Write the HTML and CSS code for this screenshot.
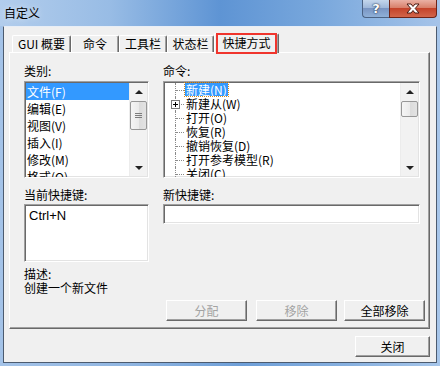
FILE: index.html
```html
<!DOCTYPE html>
<html lang="zh-CN">
<head>
  <meta charset="UTF-8" />
  <title>自定义</title>
  <link rel="stylesheet" href="styles.css">
</head>
<body>
  <div class="window">
    <div class="titlebar">
      <span class="title">自定义</span>
      <div class="caption-btns">
        <span class="cap-help">?</span>
        <span class="cap-close">
          <svg width="14" height="11" viewBox="0 0 14 11">
            <path d="M1 1h4l2 2.5L9 1h4L9.2 5.5 13 10H9L7 7.5 5 10H1l3.8-4.5z" fill="#fff" stroke="#4a1a12" stroke-width="1" stroke-linejoin="round"/>
          </svg>
        </span>
      </div>
    </div>

    <div class="client">
      <div class="tabs">
        <span class="tab t1">GUI 概要</span>
        <span class="tab t2">命令</span>
        <span class="tab t3">工具栏</span>
        <span class="tab t4">状态栏</span>
        <span class="tab tab-active">快捷方式</span>
      </div>

      <div class="panel">
        <div class="pane-grid">
          <div class="col">
            <div class="label">类别:</div>
            <div class="sunken listbox">
              <ul class="items">
                <li class="selected">文件(F)</li>
                <li>编辑(E)</li>
                <li>视图(V)</li>
                <li>插入(I)</li>
                <li>修改(M)</li>
                <li>格式(O)</li>
              </ul>
              <div class="vscroll">
                <span class="sb-btn"><i class="arrow-up"></i></span>
                <span class="sb-thumb tall"><i class="grip"></i></span>
                <span class="sb-track"></span>
                <span class="sb-btn"><i class="arrow-down"></i></span>
              </div>
            </div>
          </div>

          <div class="col">
            <div class="label">命令:</div>
            <div class="sunken listbox">
              <ul class="tree">
                <li><span class="branch"></span><span class="node node-sel">新建(N)</span></li>
                <li><span class="branch"><i class="plus"></i></span><span class="node">新建从(W)</span></li>
                <li><span class="branch"></span><span class="node">打开(O)</span></li>
                <li><span class="branch"></span><span class="node">恢复(R)</span></li>
                <li><span class="branch"></span><span class="node">撤销恢复(D)</span></li>
                <li><span class="branch"></span><span class="node">打开参考模型(R)</span></li>
                <li><span class="branch"></span><span class="node">关闭(C)</span></li>
              </ul>
              <div class="vscroll">
                <span class="sb-btn"><i class="arrow-up"></i></span>
                <span class="sb-thumb short"></span>
                <span class="sb-track"></span>
                <span class="sb-btn"><i class="arrow-down"></i></span>
              </div>
            </div>
          </div>

          <div class="col">
            <div class="label label-gap">当前快捷键:</div>
            <div class="sunken keybox">Ctrl+N</div>
            <div class="desc">描述:</div>
            <div class="desc">创建一个新文件</div>
          </div>

          <div class="col">
            <div class="label label-gap">新快捷键:</div>
            <div class="sunken keyinput"></div>
          </div>
        </div>

        <div class="actions">
          <button class="btn btn-assign" disabled>分配</button>
          <button class="btn btn-remove" disabled>移除</button>
          <button class="btn">全部移除</button>
        </div>
      </div>

      <div class="footer">
        <button class="btn btn-close">关闭</button>
      </div>
    </div>
  </div>
</body>
</html>
```

FILE: styles.css
```css
body {
  margin: 0;
  width: 440px;
  height: 366px;
  overflow: hidden;
  font-family: "Noto Sans CJK SC", "Liberation Sans", sans-serif;
  font-size: 12px;
  color: #000;
}
.window {
  width: 440px;
  height: 366px;
  display: flex;
  flex-direction: column;
  background: linear-gradient(90deg, #a4c3e8, #8fb5e1 30%, #6e9fd8 55%, #88b1e0 80%, #a7c6ea);
}

/* title bar */
.titlebar {
  height: 26px;
  display: flex;
  align-items: flex-start;
  padding: 0 3px 0 3px;
  background: linear-gradient(90deg, #b2cdec 0%, #98bce5 25%, #5e94d4 50%, #78a7dc 72%, #a6c4e9 100%);
}
.title {
  margin: 5px 0 0 1px;
  line-height: 15px;
  text-shadow: 0 0 6px rgba(255, 255, 255, 0.7);
}
.caption-btns {
  margin-left: auto;
  display: flex;
  height: 18px;
}
.cap-help,
.cap-close {
  display: flex;
  align-items: center;
  justify-content: center;
  box-sizing: border-box;
  height: 18px;
  border: 1px solid #4b6283;
  border-top: none;
}
.cap-help {
  width: 27px;
  border-radius: 0 0 0 4px;
  border-right: none;
  background: linear-gradient(180deg, #c3d6ec, #9fb8da 45%, #7995c2 50%, #8fb0d8);
  color: #fff;
  font-family: "DejaVu Sans", sans-serif;
  font-weight: bold;
  font-size: 13px;
  text-shadow: 0 0 1px #1c2c48, 0 0 2px #1c2c48;
}
.cap-close {
  width: 48px;
  border-color: #6e2418;
  border-radius: 0 0 4px 0;
  background: linear-gradient(180deg, #eab1a4, #d8806b 45%, #c4432a 50%, #d2654a);
}

/* client area */
.client {
  flex: 1;
  margin: 0 3px 3px 3px;
  display: flex;
  flex-direction: column;
  background: #f0f0f0;
  border: 1px solid #4c5b6f;
  border-top-color: #e8eef6;
  padding: 6px 6px 0 5px;
}

/* tabs */
.tabs {
  height: 19px;
  display: flex;
  align-items: flex-end;
  padding-left: 3px;
}
.tab {
  box-sizing: border-box;
  height: 17px;
  line-height: 15px;
  text-align: center;
  background: #f0f0f0;
  border: 1px solid #fff;
  border-bottom: none;
  border-right: 1px solid #696969;
  box-shadow: inset -1px 0 #a0a0a0;
  border-radius: 2px 2px 0 0;
}
.t1 { width: 59px; }
.t2 { width: 48px; }
.t3 { width: 48px; }
.t4 { width: 47px; }
.tab-active {
  position: relative;
  width: 65px;
  height: 20px;
  margin-bottom: -1px;
  line-height: 18px;
  z-index: 1;
}
.tab-active::after {
  content: '';
  position: absolute;
  left: 1px;
  right: 1px;
  top: -1px;
  bottom: -1px;
  border: 2px solid #f0352d;
}

/* panel */
.panel {
  box-sizing: border-box;
  height: 277px;
  border: 1px solid;
  border-color: #fff #696969 #696969 #fff;
  box-shadow: inset -1px -1px #a0a0a0;
  padding: 10px 0 0 14px;
}
.pane-grid {
  display: grid;
  grid-template-columns: 125px 257px;
  column-gap: 14px;
}
.col {
  display: flex;
  flex-direction: column;
}
.label {
  line-height: 16px;
  margin-bottom: 2px;
}
.label-gap {
  margin-top: 9px;
  margin-bottom: 1px;
}
.sunken {
  box-sizing: border-box;
  background: #fff;
  border: 1px solid;
  border-color: #a0a0a0 #fff #fff #a0a0a0;
  box-shadow: inset 1px 1px #696969, inset -1px -1px #e3e3e3;
}
.listbox {
  height: 97px;
  display: flex;
  padding: 1px 1px 1px 1px;
  overflow: hidden;
}
.items {
  flex: 1;
  list-style: none;
  margin: 0;
  padding: 0;
}
.items li {
  height: 17px;
  line-height: 17px;
  padding-left: 1px;
  white-space: nowrap;
}
.items .selected {
  background: #3399ff;
  color: #fff;
}

/* tree */
.tree {
  flex: 1;
  list-style: none;
  margin: 0;
  padding: 0 0 0 10px;
}
.tree li {
  height: 14px;
  display: flex;
  white-space: nowrap;
}
.branch {
  position: relative;
  width: 8px;
  border-left: 1px dotted #8a8a8a;
}
.branch::after {
  content: '';
  display: block;
  margin-top: 7px;
  border-top: 1px dotted #8a8a8a;
}
.plus {
  position: absolute;
  left: -5px;
  top: 3px;
  width: 9px;
  height: 9px;
  box-sizing: border-box;
  border: 1px solid #7a7a7a;
  background:
    linear-gradient(#000, #000) center / 5px 1px no-repeat,
    linear-gradient(#000, #000) center / 1px 5px no-repeat,
    #fff;
}
.node {
  line-height: 13px;
  height: 13px;
  padding: 0 1px;
  margin-left: 1px;
}
.node-sel {
  background: #3399ff;
  color: #fff;
  outline: 1px dotted #d88a1c;
}

/* scrollbar */
.vscroll {
  width: 17px;
  display: flex;
  flex-direction: column;
  background: #f2f2f2;
  border-left: 1px solid #ececec;
}
.sb-btn {
  height: 17px;
  display: flex;
  align-items: center;
  justify-content: center;
}
.arrow-up {
  width: 0;
  height: 0;
  border-left: 4px solid transparent;
  border-right: 4px solid transparent;
  border-bottom: 4px solid #222;
}
.arrow-down {
  width: 0;
  height: 0;
  border-left: 4px solid transparent;
  border-right: 4px solid transparent;
  border-top: 4px solid #222;
}
.sb-thumb {
  box-sizing: border-box;
  margin: 1px 0 0 0;
  border: 1px solid #979797;
  border-radius: 2px;
  background: linear-gradient(90deg, #f5f5f5, #ebebeb 50%, #dbdbdb 51%, #e3e3e3);
  display: flex;
  align-items: center;
  justify-content: center;
}
.tall { height: 29px; }
.short { height: 16px; }
.grip {
  width: 7px;
  height: 5px;
  background: repeating-linear-gradient(180deg, #7d7d7d 0 1px, transparent 1px 2px);
}
.sb-track {
  flex: 1;
}

/* shortcut fields */
.keybox {
  height: 58px;
  padding: 2px 4px;
  line-height: 17px;
  font-family: "Liberation Sans", "Noto Sans CJK SC", sans-serif;
  font-size: 13px;
}
.keyinput {
  height: 20px;
}
.desc {
  line-height: 14px;
}
.desc:first-of-type {
  margin-top: 5px;
}
.keybox + .desc {
  margin-top: 5px;
}

/* buttons */
.actions {
  display: flex;
  margin-top: 5px;
  padding-left: 142px;
}
.btn {
  box-sizing: border-box;
  width: 81px;
  height: 21px;
  padding: 0;
  font-family: inherit;
  font-size: 12px;
  color: #000;
  background: #f0f0f0;
  border: 1px solid;
  border-color: #fff #696969 #696969 #fff;
  box-shadow: inset -1px -1px #a0a0a0;
  border-radius: 0;
}
.btn:disabled {
  color: #a3a3a3;
}
.btn-assign { margin-right: 9px; }
.btn-remove { margin-right: 7px; }
.footer {
  display: flex;
  justify-content: flex-end;
  padding: 7px 0 0 0;
}
.btn-close {
  width: 75px;
}
```
